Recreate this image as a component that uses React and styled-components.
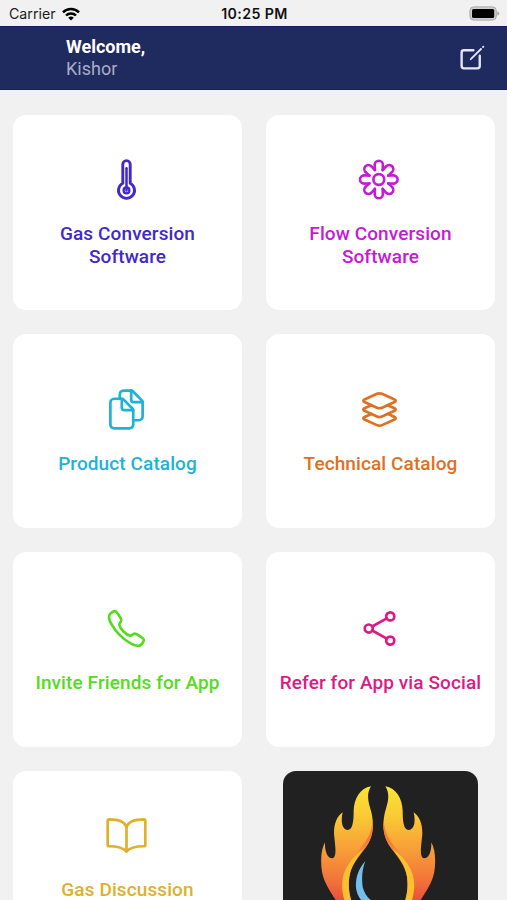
import React from 'react';
import styled, { createGlobalStyle } from 'styled-components';
import {
  IoBookOutline,
  IoCallOutline,
  IoCreateOutline,
  IoDocumentsOutline,
  IoLayersOutline,
  IoShareSocialOutline,
} from 'react-icons/io5';

const GlobalStyle = createGlobalStyle`
  body {
    margin: 0;
    background: #f1f1f1;
    font-family: Roboto, sans-serif;
  }
`;

const Screen = styled.div`
  height: 900px;
  overflow: hidden;
  display: flex;
  flex-direction: column;
`;

const StatusBar = styled.div`
  flex: none;
  display: grid;
  grid-template-columns: 1fr auto 1fr;
  align-items: center;
  height: 25.5px;
  padding: 2px 7px 0 9px;
  box-sizing: border-box;
  font-family: Inter, sans-serif;
  font-size: 14.2px;
  color: #1c1c1c;
`;

const Carrier = styled.div`
  display: flex;
  align-items: center;
  gap: 6px;
`;

const Clock = styled.div`
  font-weight: 600;
  letter-spacing: 0.4px;
  color: #111;
`;

const Battery = styled.svg`
  justify-self: end;
`;

const Header = styled.header`
  flex: none;
  display: flex;
  justify-content: space-between;
  align-items: center;
  height: 64.5px;
  padding: 0 20px 0 66px;
  box-sizing: border-box;
  background: #1f2a5e;
  border-top: 1px solid #16205a;
  border-bottom: 1px solid #16205a;
`;

const Greeting = styled.div`
  display: flex;
  flex-direction: column;
  font-size: 18px;
  line-height: 21.5px;
  color: #a8adc6;
`;

const Welcome = styled.span`
  font-weight: 700;
  color: #fff;
`;

const EditButton = styled.button`
  display: flex;
  padding: 0;
  border: 0;
  background: none;
  color: #e4e8f8;
  font-size: 29px;

  path:first-of-type {
    stroke-width: 42px;
  }
`;

const Grid = styled.main`
  display: grid;
  grid-template-columns: 1fr 1fr;
  grid-auto-rows: 194.5px;
  gap: 24.2px 24px;
  padding: 25px 12px 0 13px;
`;

const Card = styled.div`
  display: flex;
  flex-direction: column;
  align-items: center;
  justify-content: center;
  padding-top: 1.5px;
  box-sizing: border-box;
  border-radius: 13px;
  background: #fff;
  color: ${({ color }) => color};
  font-size: 43px;

  svg {
    margin-right: 2px;
  }
`;

const Label = styled.div`
  min-height: ${({ $lines }) => $lines * 23}px;
  margin-top: 20.5px;
  font-size: 19px;
  font-weight: 500;
  line-height: 23px;
  letter-spacing: 0.1px;
  text-align: center;
  white-space: pre-line;
`;

const LogoCard = styled.div`
  justify-self: center;
  width: 195px;
  border-radius: 13px;
  background: #212121;
  overflow: hidden;
`;

const ThermometerIcon = () => (
  <svg width="1em" height="1em" viewBox="-21.5 -21.5 43 43" fill="none" stroke="currentColor" strokeWidth="2.9" strokeLinecap="round">
    <path d="M-3.7 3.8V-15.2a3.7 3.7 0 0 1 7.4 0V3.8a8 8 0 1 1-7.4 0z" strokeLinejoin="round" />
    <path d="M0-11.3V10.9" strokeWidth="2.5" />
    <circle cy="10.9" r="2.9" strokeWidth="2.3" />
  </svg>
);

const petals = [0, 45, 90, 135, 180, 225, 270, 315];

const FlowerIcon = () => (
  <svg width="1em" height="1em" viewBox="-20.8 -21.5 43 43" fill="none" stroke="currentColor" strokeWidth="2.6" strokeLinecap="round">
    <circle r="5.4" />
    {petals.map((angle) => (
      <path
        key={angle}
        transform={`rotate(${angle})`}
        d="M-3.9-9.4C-3.9-11-4.1-13-4.1-14.7A4.1 4.1 0 0 1 4.1-14.7C4.1-13 3.9-11 3.9-9.4"
      />
    ))}
  </svg>
);

const cards = [
  { label: 'Gas Conversion\nSoftware', color: '#4229ca', Icon: ThermometerIcon, lines: 2 },
  { label: 'Flow Conversion\nSoftware', color: '#c51ad6', Icon: FlowerIcon, lines: 2 },
  { label: 'Product Catalog', color: '#1fb2d8', Icon: IoDocumentsOutline, lines: 1 },
  { label: 'Technical Catalog', color: '#e0701f', Icon: IoLayersOutline, lines: 1 },
  { label: 'Invite Friends for App', color: '#55dc20', Icon: IoCallOutline, lines: 1 },
  { label: 'Refer for App via Social', color: '#dc1a86', Icon: IoShareSocialOutline, lines: 1 },
  { label: 'Gas Discussion', color: '#e0b02c', Icon: IoBookOutline, lines: 2 },
];

const WifiIcon = () => (
  <svg width="18" height="14" viewBox="0 0 18 14" fill="none" stroke="#000" strokeWidth="2.5">
    <path d="M1 5.3a11.3 11.3 0 0 1 16 0" />
    <path d="M4 8.5a7 7 0 0 1 10 0" />
    <path d="M9 13.6 6.2 10.8a4 4 0 0 1 5.6 0z" fill="#000" stroke="none" />
  </svg>
);

const BatteryIcon = () => (
  <Battery width="31" height="15" viewBox="0 0 31 15">
    <rect x="0.9" y="0.9" width="26.4" height="13.2" rx="3.8" fill="#cfcfcf" stroke="#a9a9a9" />
    <rect x="3" y="3" width="22.2" height="9" rx="1.6" fill="#000" />
    <path d="M28.3 5.2q2 .8 2 2.3t-2 2.3z" fill="#a9a9a9" />
  </Battery>
);

const FlameHalf = () => (
  <>
    <path
      fill="url(#flame)"
      d="M304 79C272 84 253 116 252 152C252 184 249 209 234 210C216 209 213 182 219 157C199 171 190 200 194 232C197 262 202 292 188 295C172 294 165 272 166 247C154 269 152 302 157 335C164 372 186 400 206 432L262 460C240 425 234 385 239 350C247 302 287 274 301 240C312 211 312 179 303 149C294 121 291 100 304 79Z"
    />
    <path
      fill="url(#ember)"
      d="M309 182C314 213 303 245 281 270C257 297 238 318 238 352C229 330 241 302 262 276C289 246 305 222 309 182Z"
    />
    <path
      fill="#fbc02f"
      d="M281 268C243 296 212 334 218 390C220 414 229 440 244 460L264 460C240 425 234 387 239 350C244 316 264 292 281 268Z"
    />
  </>
);

const FlameLogo = () => (
  <svg width="195" height="195" viewBox="40 33 585 585">
    <defs>
      <linearGradient id="flame" gradientUnits="userSpaceOnUse" x1="0" y1="79" x2="0" y2="440">
        <stop offset="0" stopColor="#f9e536" />
        <stop offset="0.25" stopColor="#fac934" />
        <stop offset="0.55" stopColor="#f79a38" />
        <stop offset="0.8" stopColor="#f1703a" />
        <stop offset="1" stopColor="#e94536" />
      </linearGradient>
      <linearGradient id="ember" gradientUnits="userSpaceOnUse" x1="0" y1="182" x2="0" y2="330">
        <stop offset="0" stopColor="#f58a34" />
        <stop offset="0.4" stopColor="#f17a38" />
        <stop offset="1" stopColor="#f9b233" />
      </linearGradient>
    </defs>
    <FlameHalf />
    <g transform="translate(651 0) scale(-1 1)">
      <FlameHalf />
    </g>
    <path
      fill="#74c0ea"
      d="M287 303C267 326 257 352 259 384C263 415 285 440 325 448L325 430C300 424 285 405 279 381C275 352 278 327 287 303Z"
    />
  </svg>
);

export default function App() {
  return (
    <Screen>
      <GlobalStyle />
      <StatusBar>
        <Carrier>
          Carrier
          <WifiIcon />
        </Carrier>
        <Clock>10:25 PM</Clock>
        <BatteryIcon />
      </StatusBar>
      <Header>
        <Greeting>
          <Welcome>Welcome,</Welcome>
          Kishor
        </Greeting>
        <EditButton aria-label="Edit">
          <IoCreateOutline />
        </EditButton>
      </Header>
      <Grid>
        {cards.map(({ label, color, Icon, lines }) => (
          <Card key={label} color={color}>
            <Icon />
            <Label $lines={lines}>{label}</Label>
          </Card>
        ))}
        <LogoCard>
          <FlameLogo />
        </LogoCard>
      </Grid>
    </Screen>
  );
}
